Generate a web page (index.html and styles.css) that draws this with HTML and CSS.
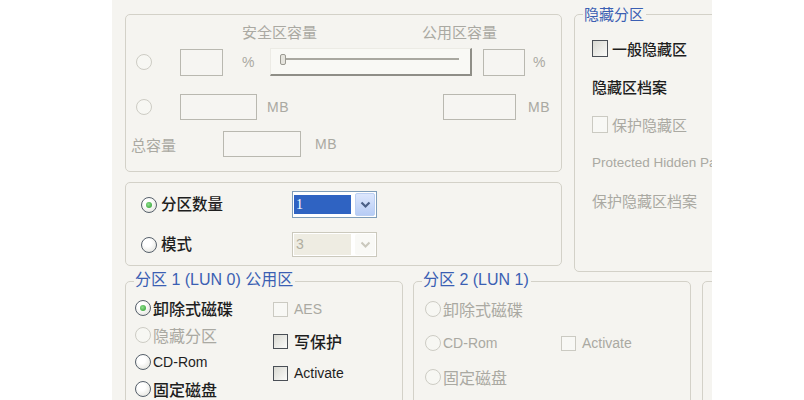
FILE: index.html
```html
<!DOCTYPE html>
<html lang="zh-CN">
<head>
<meta charset="utf-8">
<title>分区设置</title>
<link rel="stylesheet" href="styles.css">
</head>
<body>
<div class="dialog">
  <div class="top">
    <div class="left-col">
      <div class="group cap">
        <div class="row heads">
          <span class="head h1">安全区容量</span>
          <span class="head h2">公用区容量</span>
        </div>
        <div class="row r1">
          <span class="radio dis rc"></span>
          <span class="box b1"></span>
          <span class="unit u1">%</span>
          <div class="slider"><span class="track"></span><span class="thumb"></span></div>
          <span class="box b2"></span>
          <span class="unit u2">%</span>
        </div>
        <div class="row r2">
          <span class="radio dis rc"></span>
          <span class="box b3"></span>
          <span class="unit u3">MB</span>
          <span class="box b4"></span>
          <span class="unit u4">MB</span>
        </div>
        <div class="row r3">
          <span class="total">总容量</span>
          <span class="box b5"></span>
          <span class="unit u5">MB</span>
        </div>
      </div>
      <div class="group mode">
        <div class="mrow m1">
          <div class="opt"><span class="radio on"></span><span class="otxt">分区数量</span></div>
          <div class="select sel-on">
            <span class="val"><span class="vtxt">1</span></span>
            <span class="btn"><svg width="11" height="8" viewBox="0 0 11 8"><path d="M1.5 1.5 L5.5 5.5 L9.5 1.5" fill="none" stroke="#4a5f86" stroke-width="2.2"/></svg></span>
          </div>
        </div>
        <div class="mrow m2">
          <div class="opt"><span class="radio"></span><span class="otxt">模式</span></div>
          <div class="select sel-off">
            <span class="val"><span class="vtxt">3</span></span>
            <span class="btn"><svg width="11" height="8" viewBox="0 0 11 8"><path d="M1.5 1.5 L5.5 5.5 L9.5 1.5" fill="none" stroke="#cac8bd" stroke-width="2"/></svg></span>
          </div>
        </div>
      </div>
    </div>
    <div class="group hidden">
      <span class="legend lg-h">隐藏分区</span>
      <div class="hrow"><span class="check big"></span><span class="htxt">一般隐藏区</span></div>
      <div class="hrow"><span class="plain">隐藏区档案</span></div>
      <div class="hrow"><span class="check big dis"></span><span class="htxt gray">保护隐藏区</span></div>
      <div class="hrow"><span class="plain gray latin">Protected Hidden Partition</span></div>
      <div class="hrow"><span class="plain gray">保护隐藏区档案</span></div>
    </div>
  </div>
  <div class="bottom">
    <div class="group lun lun0">
      <span class="legend lg-l">分区 1 (LUN 0) 公用区</span>
      <div class="col c-radio">
        <div class="lrow"><span class="radio on"></span><span class="ltxt">卸除式磁碟</span></div>
        <div class="lrow"><span class="radio dis"></span><span class="ltxt gray">隐藏分区</span></div>
        <div class="lrow"><span class="radio"></span><span class="ltxt latin">CD-Rom</span></div>
        <div class="lrow"><span class="radio"></span><span class="ltxt">固定磁盘</span></div>
      </div>
      <div class="col c-check">
        <div class="crow"><span class="check dis"></span><span class="ctxt gray latin">AES</span></div>
        <div class="crow"><span class="check"></span><span class="ctxt">写保护</span></div>
        <div class="crow"><span class="check"></span><span class="ctxt latin">Activate</span></div>
      </div>
    </div>
    <div class="group lun lun1">
      <span class="legend lg-l">分区 2 (LUN 1)</span>
      <div class="col c-radio2">
        <div class="lrow2"><span class="radio dis"></span><span class="ltxt gray">卸除式磁碟</span></div>
        <div class="lrow2"><span class="radio dis"></span><span class="ltxt gray latin">CD-Rom</span></div>
        <div class="lrow2"><span class="radio dis"></span><span class="ltxt gray">固定磁盘</span></div>
      </div>
      <div class="col c-check2">
        <div class="lrow2"></div>
        <div class="lrow2"><span class="check dis"></span><span class="ctxt gray latin">Activate</span></div>
      </div>
    </div>
    <div class="group lun lun2"></div>
  </div>
</div>
</body>
</html>
```
FILE: styles.css
```css
* { box-sizing: border-box; }
html, body { margin: 0; padding: 0; }
body {
  width: 804px;
  height: 400px;
  overflow: hidden;
  background: #ffffff;
  font-family: "Liberation Sans", "Noto Sans CJK SC", sans-serif;
  color: #1e1e1e;
}
.dialog {
  margin-left: 112px;
  width: 600px;
  height: 400px;
  overflow: hidden;
  background: #f5f4f0;
  padding: 14px 0 0 13px;
}
.top { display: flex; gap: 12px; height: 258px; }
.left-col { flex: none; width: 437px; display: flex; flex-direction: column; gap: 10px; }
.group {
  border: 1px solid #d3d1c8;
  border-radius: 5px;
  position: relative;
  flex: none;
}
.latin { font-family: "Liberation Sans", sans-serif; font-size: 14px; }

/* capacity group */
.cap { height: 158px; padding-top: 9px; }
.row { display: flex; align-items: center; }
.heads { height: 18px; }
.head { font-size: 15px; line-height: 18px; color: #aaa9a2; white-space: nowrap; }
.h1 { margin-left: 116px; width: 180px; }
.r1 { margin-top: 6px; height: 28px; }
.r2 { margin-top: 18px; height: 26px; }
.r3 { margin-top: 11px; height: 26px; }
.rc { margin-left: 10px; }
.box { flex: none; border: 1px solid #b9b8b0; background: #f6f5f2; }
.b1 { margin-left: 28px; width: 43px; height: 27px; }
.b2 { margin-left: 11px; width: 42px; height: 27px; }
.b3 { margin-left: 28px; width: 77px; height: 26px; }
.b4 { width: 73px; height: 26px; }
.b5 { width: 78px; height: 26px; }
.unit { flex: none; font-size: 14px; color: #aaa9a2; letter-spacing: 0.5px; }
.u1 { margin-left: 19px; width: 28px; }
.u2 { margin-left: 8px; }
.u3 { margin-left: 10px; width: 176px; }
.u4 { margin-left: 12px; }
.u5 { margin-left: 14px; }
.total { flex: none; margin-left: 5px; width: 92px; font-size: 15px; color: #aaa9a2; }
.slider {
  flex: none;
  position: relative;
  width: 202px;
  height: 28px;
  padding: 9px 0 0 10px;
  background: #f9f9f5;
  border-top: 1px solid #ecebe5;
  border-left: 1px solid #ecebe5;
  border-right: 2px solid #8f8e87;
  border-bottom: 2px solid #8f8e87;
}
.track { display: block; width: 178px; height: 2px; background: #a9a8a0; }
.thumb {
  position: absolute;
  left: 9px;
  top: 5px;
  width: 6px;
  height: 11px;
  border: 1px solid #9c9b93;
  border-radius: 2px;
  background: #e6e5de;
}

/* radios and checks */
.radio {
  flex: none;
  position: relative;
  width: 16px;
  height: 16px;
  border-radius: 50%;
  border: 1px solid #56606b;
  background: radial-gradient(circle at 40% 35%, #ffffff 30%, #dcdcd5 100%);
}
.radio.on::after {
  content: "";
  position: absolute;
  left: 4px;
  top: 4px;
  width: 6px;
  height: 6px;
  border-radius: 50%;
  background: radial-gradient(circle at 40% 40%, #8ee08e, #2a9a2a);
}
.radio.dis { border-color: #cdccc4; background: #f7f7f3; }
.check {
  flex: none;
  width: 15px;
  height: 15px;
  border: 1px solid #4a4f56;
  background: linear-gradient(135deg, #d9d9d2, #fbfbf9);
}
.check.big { width: 16px; height: 17px; }
.check.dis { border-color: #cbcac2; background: #f8f8f5; }

/* mode group */
.mode { height: 84px; padding-top: 8px; }
.mrow { display: flex; align-items: center; }
.m1 { height: 27px; }
.m2 { margin-top: 14px; height: 25px; }
.opt { flex: none; width: 166px; display: flex; align-items: center; padding-left: 15px; }
.otxt { margin-left: 4px; font-size: 15.5px; line-height: 20px; font-weight: 500; }
.select { flex: none; width: 85px; display: flex; align-items: center; background: #ffffff; }
.sel-on { height: 27px; border: 1px solid #7f9db9; }
.sel-off { height: 25px; border: 1px solid #cbc9bd; }
.val { flex: none; margin-left: 1px; width: 57px; }
.vtxt { display: block; padding-left: 2px; font-size: 14px; font-family: "Liberation Serif", serif; }
.sel-on .vtxt { height: 19px; line-height: 19px; background: #2f63c2; color: #ffffff; }
.sel-off .vtxt { height: 21px; line-height: 21px; background: #eeece2; color: #b0ae9f; font-family: "Liberation Sans", sans-serif; }
.btn {
  flex: none;
  margin-left: 4px;
  width: 20px;
  display: flex;
  align-items: center;
  justify-content: center;
  border-radius: 2px;
}
.sel-on .btn { height: 23px; background: linear-gradient(#dde7fd, #b7ccf5); border: 1px solid #bcd0f3; }
.sel-off .btn { height: 21px; background: #f9f9f6; }

/* hidden group */
.hidden { width: 250px; height: 258px; padding: 14px 0 0 17px; }
.legend {
  position: absolute;
  padding: 0 2px 0 1px;
  background: #f5f4f0;
  color: #3b5fb3;
  line-height: 18px;
  white-space: nowrap;
}
.lg-h { left: 8px; top: -9px; font-size: 15px; }
.hrow { height: 38px; display: flex; align-items: center; font-size: 15px; white-space: nowrap; font-weight: 500; }
.htxt { margin-left: 4px; }
.plain { display: block; }
.hrow .latin { font-size: 13.5px; }

/* bottom */
.bottom { display: flex; gap: 10px; margin-top: 9px; }
.lun { width: 278px; height: 200px; display: flex; }
.lun2 { margin-left: 1px; }
.lg-l { left: 8px; top: -11px; font-size: 16px; }
.lun0 { padding: 11px 0 0 9px; }
.lun1 { padding: 10px 0 0 11px; }
.col { display: flex; flex-direction: column; }
.c-radio { width: 138px; margin-top: 1px; }
.c-radio2 { width: 136px; }
.lrow { height: 27px; display: flex; align-items: center; }
.lrow2 { height: 34px; display: flex; align-items: center; }
.ltxt { margin-left: 2px; font-size: 16px; white-space: nowrap; font-weight: 500; }
.crow { height: 32px; display: flex; align-items: center; }
.ctxt { margin-left: 6px; font-size: 16px; white-space: nowrap; font-weight: 500; }
.ctxt.latin, .ltxt.latin { font-size: 14px; font-weight: 400; }

/* disabled text: always regular weight, grey */
.group .gray { color: #aaa9a2; font-weight: 400; }
```
